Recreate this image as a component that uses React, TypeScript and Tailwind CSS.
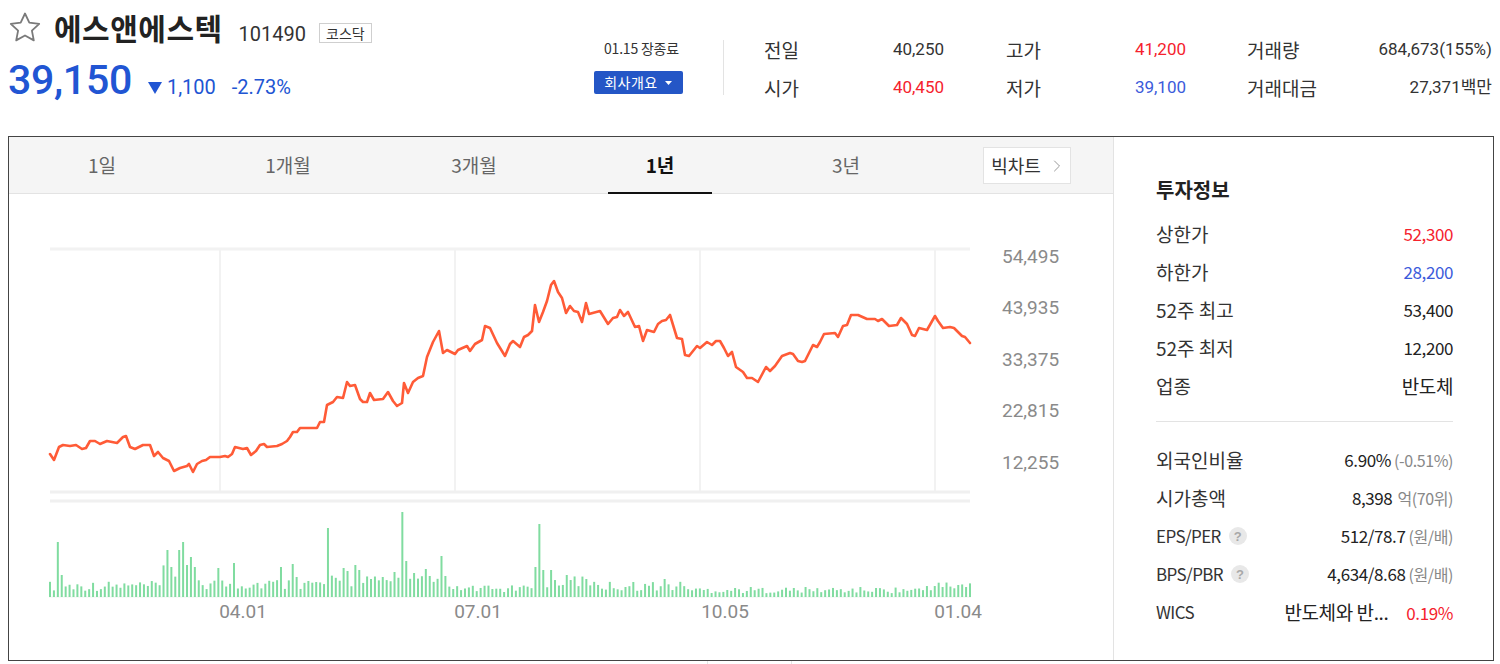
import { ChevronRight } from 'lucide-react';

// 1년 주가 흐름 (페이지 좌표 기준)
const pricePoints: [number, number][] = [
  [50, 455], [54, 461], [59, 448], [63, 446], [70, 447], [76, 446], [82, 450], [86, 449], [90, 442],
  [95, 442], [100, 445], [107, 442], [112, 443], [117, 444], [123, 438], [126, 437], [130, 448],
  [135, 450], [139, 448], [143, 446], [150, 446], [154, 457], [158, 453], [163, 459], [169, 462],
  [174, 472], [180, 469], [187, 467], [189, 465], [193, 473], [197, 465], [202, 462], [206, 461],
  [210, 458], [220, 458], [225, 457], [228, 458], [232, 455], [235, 448], [243, 450], [247, 449],
  [251, 456], [256, 452], [260, 446], [264, 445], [267, 448], [277, 447], [282, 445], [287, 442],
  [290, 438], [293, 433], [297, 433], [300, 429], [310, 429], [317, 429], [320, 423], [324, 423],
  [327, 406], [333, 403], [337, 398], [343, 399], [347, 383], [350, 387], [355, 386], [360, 400],
  [363, 403], [367, 403], [370, 394], [374, 401], [383, 400], [388, 393], [393, 402], [397, 407],
  [402, 404], [404, 384], [408, 394], [413, 383], [418, 379], [423, 377], [427, 358], [433, 343],
  [439, 332], [443, 354], [447, 351], [455, 355], [458, 351], [467, 347], [470, 352], [475, 345],
  [482, 341], [485, 327], [490, 329], [497, 344], [505, 357], [510, 345], [513, 342], [520, 348],
  [524, 338], [528, 336], [532, 332], [535, 306], [539, 323], [543, 313], [547, 302], [551, 286],
  [554, 282], [558, 293], [562, 299], [566, 314], [570, 307], [574, 312], [578, 313], [582, 323],
  [586, 304], [589, 315], [600, 312], [608, 325], [613, 319], [617, 318], [620, 311], [624, 317],
  [628, 313], [635, 328], [639, 327], [643, 342], [647, 331], [654, 333], [658, 325], [662, 322],
  [666, 321], [670, 316], [677, 339], [682, 340], [685, 356], [689, 357], [697, 347], [700, 349],
  [707, 343], [712, 346], [716, 342], [720, 342], [724, 349], [728, 357], [732, 353], [736, 368],
  [743, 373], [747, 379], [752, 379], [758, 383], [766, 368], [770, 372], [775, 367], [782, 357],
  [790, 354], [793, 355], [798, 362], [802, 363], [805, 362], [813, 346], [817, 348], [820, 343],
  [824, 335], [835, 334], [838, 338], [843, 327], [847, 326], [851, 316], [858, 316], [867, 320],
  [875, 320], [878, 322], [882, 320], [889, 327], [897, 326], [901, 319], [907, 325], [912, 336],
  [915, 337], [919, 329], [927, 331], [935, 317], [938, 322], [943, 329], [950, 328], [954, 329],
  [962, 337], [965, 338], [970, 344],
];

const BAR_COUNT = 236;
const BAR_STEP = 920 / (BAR_COUNT - 1);

const spikes: [number, number][] = [
  [58, 55], [62, 22], [169, 47], [173, 30], [180, 47], [184, 55], [188, 32], [191, 40], [195, 30],
  [220, 29], [235, 34], [281, 30], [292, 33], [296, 20], [327, 69], [345, 29], [349, 26], [357, 32],
  [361, 27], [384, 20], [396, 25], [404, 85], [408, 36], [415, 24], [426, 28], [442, 41], [446, 21],
  [535, 30], [539, 73], [543, 27], [550, 27], [565, 22], [585, 18], [665, 18],
];

const volumes = Array.from({ length: BAR_COUNT }, (_, i) => {
  const x = 50 + i * BAR_STEP;
  let base = 11;
  if (x < 160) base = 11;
  else if (x < 200) base = 22;
  else if (x < 330) base = 13;
  else if (x < 440) base = 15;
  else if (x < 525) base = 8;
  else if (x < 600) base = 16;
  else if (x < 690) base = 11;
  else if (x < 925) base = 7;
  else base = 11;
  const r = Math.abs((Math.sin((i + 1) * 12.9898) * 43758.5453) % 1);
  return base * (0.55 + 0.9 * r);
});
spikes.forEach(([x, h]) => {
  const i = Math.round((x - 50) / BAR_STEP);
  if (i >= 0 && i < BAR_COUNT) volumes[i] = h;
});

const yLabels = [
  { y: 257, t: '54,495' },
  { y: 308, t: '43,935' },
  { y: 360, t: '33,375' },
  { y: 411, t: '22,815' },
  { y: 463, t: '12,255' },
];

const xLabels = [
  { x: 243, t: '04.01' },
  { x: 478, t: '07.01' },
  { x: 725, t: '10.05' },
  { x: 958, t: '01.04' },
];

const tabs = ['1일', '1개월', '3개월', '1년', '3년'];

function Star() {
  return (
    <svg width="34" height="32" viewBox="0 0 34 32" fill="none">
      <path
        d="M17 2.5l4.3 9.1 9.9 1.2-7.3 6.8 1.9 9.8L17 24.5l-8.8 4.9 1.9-9.8-7.3-6.8 9.9-1.2z"
        stroke="#7a7a7a"
        strokeWidth="1.8"
        strokeLinejoin="round"
      />
    </svg>
  );
}

function HelpDot() {
  return (
    <span className="ml-[8px] inline-flex h-[18px] w-[18px] shrink-0 items-center justify-center rounded-full bg-[#e8e8e8] font-['Liberation_Sans',sans-serif] text-[13px] font-bold leading-none text-[#a8a8a8]">
      ?
    </span>
  );
}

function StatGroup({ rows, width }: { rows: { label: string; value: React.ReactNode; color?: string }[]; width: string }) {
  return (
    <div className={`flex flex-col ${width}`}>
      {rows.map((r) => (
        <div key={r.label} className="flex h-[38px] items-center justify-between">
          <span className="font-['Noto_Sans_CJK_KR',sans-serif] text-[19px] text-[#333]">{r.label}</span>
          <span className={`text-[17px] ${r.color ?? 'text-[#333]'}`}>{r.value}</span>
        </div>
      ))}
    </div>
  );
}

function InfoRow({ label, children }: { label: React.ReactNode; children: React.ReactNode }) {
  return (
    <div className="flex h-[38px] items-center justify-between">
      <span className="flex items-center text-[19px] text-[#333]">{label}</span>
      <span className="flex items-baseline text-[17px] tracking-[-0.4px] text-[#222]">{children}</span>
    </div>
  );
}

function Chart() {
  const line = pricePoints.map(([x, y]) => `${x},${y}`).join(' ');
  return (
    <svg width="1104" height="465" viewBox="9 195 1104 465" className="block">
      {/* 가격 영역 격자 */}
      <line x1="50" y1="250" x2="970" y2="250" stroke="#f2f2f2" strokeWidth="3" />
      {[220, 455, 700, 935].map((x) => (
        <line key={x} x1={x} y1="250" x2={x} y2="493" stroke="#f2f2f2" strokeWidth="2" />
      ))}
      <line x1="50" y1="493" x2="970" y2="493" stroke="#f0f0f0" strokeWidth="3" />
      <line x1="50" y1="502" x2="970" y2="502" stroke="#f0f0f0" strokeWidth="3" />
      <polyline
        points={line}
        fill="none"
        stroke="#ff5b37"
        strokeWidth="2.6"
        strokeLinejoin="round"
        strokeLinecap="round"
      />
      {yLabels.map((l) => (
        <text
          key={l.t}
          x="1002"
          y={l.y}
          dominantBaseline="central"
          fontSize="19"
          fill="#8a8a8a"
          fontFamily="Roboto, 'Liberation Sans', sans-serif"
        >
          {l.t}
        </text>
      ))}
      {/* 거래량 */}
      <line x1="49" y1="598" x2="971" y2="598" stroke="#eef6f0" strokeWidth="1" />
      {volumes.map((h, i) => (
        <rect key={i} x={49 + i * BAR_STEP} y={598 - h} width="2" height={h} fill="#80dca0" />
      ))}
      {xLabels.map((l) => (
        <text
          key={l.t}
          x={l.x}
          y="612"
          textAnchor="middle"
          dominantBaseline="central"
          fontSize="19"
          fill="#8a8a8a"
          fontFamily="Roboto, 'Liberation Sans', sans-serif"
        >
          {l.t}
        </text>
      ))}
    </svg>
  );
}

export default function App() {
  return (
    <div className="h-[664px] w-[1500px] overflow-hidden bg-white font-['Roboto','Noto_Sans_CJK_KR',sans-serif] text-[#222]">
      {/* 상단 종목 정보 */}
      <div className="flex h-[136px] items-start">
        <div className="ml-2 w-[585px]">
          <div className="mt-[8px] flex h-[38px] items-center">
            <Star />
            <span className="ml-[12px] font-['Noto_Sans_CJK_KR',sans-serif] text-[30px] font-bold leading-[38px] tracking-[0.5px] text-[#222]">
              에스앤에스텍
            </span>
            <span className="ml-[16px] mt-[14px] text-[20px] leading-none text-[#333]">101490</span>
            <span className="ml-[13px] mt-[12px] border border-[#cfcfcf] px-[6px] font-['Noto_Sans_CJK_KR',sans-serif] text-[14px] leading-[18px] text-[#333]">
              코스닥
            </span>
          </div>
          <div className="mt-[10px] flex items-baseline text-[#2155d3]">
            <span className="text-[41px] font-medium leading-[48px] tracking-[-0.3px]">39,150</span>
            <svg width="14" height="12" viewBox="0 0 14 12" className="mb-[3px] ml-[16px]">
              <path d="M0 0h14L7 12z" fill="#2155d3" />
            </svg>
            <span className="ml-[5px] text-[20px]">1,100</span>
            <span className="ml-[16px] text-[20px]">-2.73%</span>
          </div>
        </div>

        <div className="mt-[39px] flex w-[90px] flex-col items-center">
          <span className="whitespace-nowrap pl-[7px] font-['Noto_Sans_CJK_KR',sans-serif] text-[14px] leading-[18px] tracking-[-0.2px] text-[#333]">
            01.15 장종료
          </span>
          <button className="mt-[14px] flex h-[23px] w-[89px] items-center justify-center gap-[7px] rounded-[2px] bg-[#2456c6] font-['Noto_Sans_CJK_KR',sans-serif] text-[14px] tracking-[0.5px] text-white">
            회사개요
            <svg width="7" height="4" viewBox="0 0 7 4">
              <path d="M0 0h7L3.5 4z" fill="#fff" />
            </svg>
          </button>
        </div>

        <div className="ml-[40px] mt-[40px] h-[55px] border-l border-[#e3e3e3]" />

        <div className="ml-[40px] mt-[31px] flex">
          <StatGroup
            width="w-[180px]"
            rows={[
              { label: '전일', value: '40,250' },
              { label: '시가', value: '40,450', color: 'text-[#f5222d]' },
            ]}
          />
          <div className="w-[62px]" />
          <StatGroup
            width="w-[180px]"
            rows={[
              { label: '고가', value: '41,200', color: 'text-[#f5222d]' },
              { label: '저가', value: '39,100', color: 'text-[#3b5bdb]' },
            ]}
          />
          <div className="w-[61px]" />
          <StatGroup
            width="w-[245px]"
            rows={[
              { label: '거래량', value: '684,673(155%)' },
              { label: '거래대금', value: '27,371백만' },
            ]}
          />
        </div>
      </div>

      {/* 차트 + 투자정보 */}
      <div className="ml-2 flex h-[525px] w-[1486px] border border-[#444]">
        <div className="flex w-[1104px] flex-col">
          <div className="flex h-[57px] border-b border-[#e3e3e3] bg-[#f5f5f5]">
            {tabs.map((t) =>
              t === '1년' ? (
                <div key={t} className="flex w-[186px] justify-center">
                  <span className="-mb-px flex h-[57px] w-[104px] items-center justify-center border-b-2 border-[#111] pt-[2px] font-['Noto_Sans_CJK_KR',sans-serif] text-[19px] font-bold text-[#111]">
                    {t}
                  </span>
                </div>
              ) : (
                <div
                  key={t}
                  className="flex w-[186px] items-center justify-center font-['Noto_Sans_CJK_KR',sans-serif] text-[19px] text-[#666]"
                >
                  {t}
                </div>
              )
            )}
            <button className="ml-[44px] mt-[10px] flex h-[37px] w-[88px] items-center justify-center gap-[6px] self-start border border-[#e3e3e3] bg-white pl-[4px] font-['Noto_Sans_CJK_KR',sans-serif] text-[18px] text-[#333]">
              빅차트
              <ChevronRight size={20} strokeWidth={1.2} color="#999" />
            </button>
          </div>
          <Chart />
        </div>

        <div className="flex flex-1 flex-col border-l border-[#e3e3e3] pl-[42px] pr-[40px] pt-[40px] font-['Noto_Sans_CJK_KR',sans-serif]">
          <h3 className="text-[20px] font-bold leading-[26px] text-[#222]">투자정보</h3>
          <div className="mt-[12px]">
            <InfoRow label="상한가">
              <span className="text-[#f5222d]">52,300</span>
            </InfoRow>
            <InfoRow label="하한가">
              <span className="text-[#3b5bdb]">28,200</span>
            </InfoRow>
            <InfoRow label="52주 최고">53,400</InfoRow>
            <InfoRow label="52주 최저">12,200</InfoRow>
            <InfoRow label="업종">
              <span className="text-[19px]">반도체</span>
            </InfoRow>
          </div>
          <div className="mt-[16px] border-t border-[#e3e3e3]" />
          <div className="mt-[19px]">
            <InfoRow label="외국인비율">
              6.90%<span className="ml-[3px] text-[16px] text-[#888]">(-0.51%)</span>
            </InfoRow>
            <InfoRow label="시가총액">
              8,398<span className="ml-[5px] text-[16px] text-[#888]">억(70위)</span>
            </InfoRow>
            <InfoRow
              label={
                <>
                  <span className="text-[17px] tracking-[-0.6px]">EPS/PER</span>
                  <HelpDot />
                </>
              }
            >
              512/78.7<span className="ml-[3px] text-[16px] text-[#888]">(원/배)</span>
            </InfoRow>
            <InfoRow
              label={
                <>
                  <span className="text-[17px] tracking-[-0.6px]">BPS/PBR</span>
                  <HelpDot />
                </>
              }
            >
              4,634/8.68<span className="ml-[3px] text-[16px] text-[#888]">(원/배)</span>
            </InfoRow>
            <InfoRow label={<span className="text-[17px] tracking-[-0.6px]">WICS</span>}>
              <span className="text-[19px]">반도체와 반...</span>
              <span className="ml-[18px] text-[#f5222d]">0.19%</span>
            </InfoRow>
          </div>
        </div>
      </div>
      <div className="ml-[707px] h-[3px] w-[85px] border-x border-[#e5e5e5]" />
    </div>
  );
}
